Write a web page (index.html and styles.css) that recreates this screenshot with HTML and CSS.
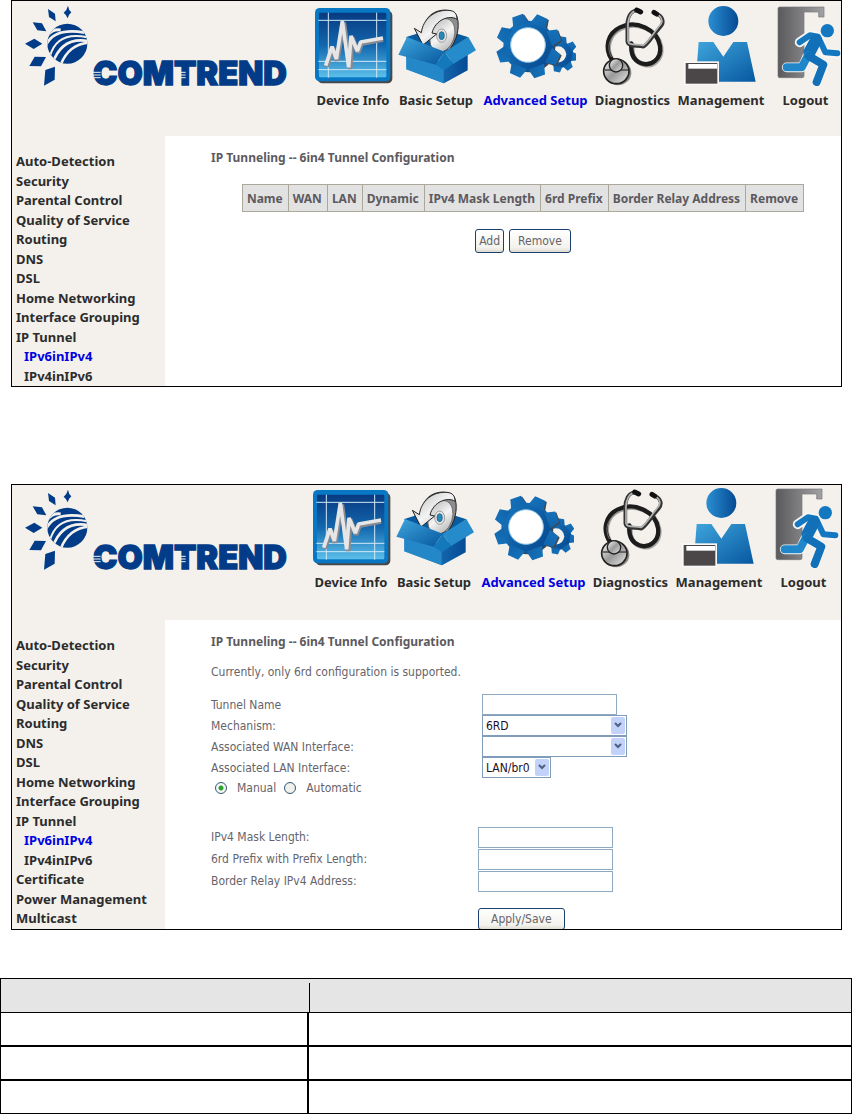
FILE: index.html
```
<!DOCTYPE html>
<html lang="en">
<head>
    <meta charset="UTF-8">
    <meta name="viewport" content="width=device-width, initial-scale=1.0">
    <title>IP Tunneling</title>
    <link rel="stylesheet" href="styles.css">
</head>
<body>

    <!-- Shared logo and menu icons -->
    <svg class="sprite" aria-hidden="true">
        <defs>
            <linearGradient id="blueDown" x1="0" y1="0" x2="0" y2="1">
                <stop offset="0" stop-color="#083a80"/>
                <stop offset="0.5" stop-color="#1266ad"/>
                <stop offset="1" stop-color="#5cc0ea"/>
            </linearGradient>
            <linearGradient id="blueLight" x1="0" y1="0" x2="1" y2="1">
                <stop offset="0" stop-color="#3fa5dc"/>
                <stop offset="1" stop-color="#0758a0"/>
            </linearGradient>
            <linearGradient id="blueSide" x1="0" y1="0" x2="1" y2="0">
                <stop offset="0" stop-color="#2b8fd2"/>
                <stop offset="1" stop-color="#054a94"/>
            </linearGradient>
            <linearGradient id="gearFill" gradientUnits="userSpaceOnUse" x1="-80" y1="-60" x2="80" y2="60">
                <stop offset="0" stop-color="#1878c0"/>
                <stop offset="1" stop-color="#06468c"/>
            </linearGradient>
            <linearGradient id="metal" x1="0" y1="0" x2="1" y2="1">
                <stop offset="0" stop-color="#ffffff"/>
                <stop offset="0.5" stop-color="#9a9a9a"/>
                <stop offset="1" stop-color="#e8e8e8"/>
            </linearGradient>
            <linearGradient id="disc" x1="0" y1="0" x2="1" y2="1">
                <stop offset="0" stop-color="#b4b4b4"/>
                <stop offset="0.5" stop-color="#f4f4f4"/>
                <stop offset="1" stop-color="#a8a8a8"/>
            </linearGradient>
            <linearGradient id="door" x1="0" y1="0" x2="1" y2="0">
                <stop offset="0" stop-color="#5a5a5c"/>
                <stop offset="1" stop-color="#a2a2a4"/>
            </linearGradient>
            <clipPath id="globe"><circle cx="202" cy="131" r="60"/></clipPath>
            <path id="tooth" d="M-25 -66 L-17 -97 H17 L25 -66 Z"/>
        </defs>

        <symbol id="logo" viewBox="72 12 798 252">
            <g fill="#023c88">
                <path d="M144 27 L165 41 167 64 147 51Z"/>
                <path d="M204 17 Q206 31 214 37 Q206 44 203 55 Q199 44 191 38 Q201 30 204 17Z"/>
                <path d="M98 67 L126 70 139 94 112 91Z"/>
                <path d="M75 131 L103 116 127 131 101 147Z"/>
                <path d="M104 170 L138 171 123 199 88 198Z"/>
                <path d="M136 210 L165 200 164 239 132 257Z"/>
                <circle cx="202" cy="131" r="60"/>
            </g>
            <g class="globe-lines" clip-path="url(#globe)">
                <path d="M142 107 Q158 86 182 90"/>
                <path d="M138 136 Q162 82 254 98" stroke-width="8"/>
                <path d="M150 168 Q172 92 262 112" stroke-width="6"/>
                <path d="M158 190 Q186 108 268 124" stroke-width="8"/>
                <path d="M180 200 Q204 132 268 128" stroke-width="8"/>
            </g>
            <text x="279" y="255" class="logo-text">COMTREND</text>
            <path class="logo-stripes" d="M276 217H302M276 225H302M276 233H302M529 217H557M529 225H557M529 233H557"/>
        </symbol>

        <symbol id="icon-device" viewBox="36 18 240 240">
            <rect x="50" y="32" width="224" height="218" rx="14" fill="#46484c"/>
            <rect x="42" y="24" width="226" height="220" rx="14" fill="#0878c4"/>
            <rect x="54" y="38" width="202" height="194" rx="4" fill="url(#blueDown)"/>
            <path d="M52 61H256M52 184H256M52 209H256M82 38V233M227 38V233" stroke="#cfe8f8" stroke-width="3"/>
            <path d="M77 200L95 145 108 182 128 68 147 207 153 113 171 158 181 131 246 118" fill="none" stroke="#888b92" stroke-width="15" stroke-linejoin="bevel"/>
            <path d="M74 197L93 140 106 177 124 63 143 202 150 108 169 153 179 126 246 114" fill="none" stroke="#e6e6e6" stroke-width="11" stroke-linejoin="bevel"/>
        </symbol>

        <symbol id="icon-basic" viewBox="285 18 240 240">
            <path d="M314 112L408 82 502 112 430 162Z" fill="#075b9e"/>
            <path d="M372 72C380 36 430 18 462 40C480 62 472 120 444 150L410 150Z" fill="#8c8e90" stroke="#222" stroke-width="3"/>
            <ellipse cx="424" cy="106" rx="36" ry="52" transform="rotate(18 424 106)" fill="url(#disc)" stroke="#555" stroke-width="2"/>
            <ellipse cx="422" cy="107" rx="15" ry="20" fill="#e4e4e4" stroke="#777" stroke-width="2"/>
            <ellipse cx="422" cy="107" rx="8" ry="12" fill="#2889b8" stroke="#155575" stroke-width="2"/>
            <path d="M361 98C366 58 399 28 444 31C462 33 468 42 468 58C445 43 402 60 393 99L407 102 366 135 340 85Z" fill="url(#disc)" stroke="#222" stroke-width="3"/>
            <path d="M316 160L428 190 500 158V211L429 250 316 208Z" fill="url(#blueSide)"/>
            <path d="M316 160L428 190V250L316 208Z" fill="#2488c8"/>
            <path d="M318 111L431 155 404 194 292 164Z" fill="url(#blueLight)"/>
            <path d="M431 155L502 111 525 151 456 192Z" fill="#268bca"/>
            <path d="M431 155L404 194 429 211 456 192Z" fill="#1479bb"/>
        </symbol>

        <symbol id="icon-advanced" viewBox="582 18 240 240">
            <g transform="translate(774 163) scale(0.55)" fill="url(#gearFill)">
                <circle r="72"/>
                <use href="#tooth" transform="rotate(10)"/>
                <use href="#tooth" transform="rotate(55)"/>
                <use href="#tooth" transform="rotate(100)"/>
                <use href="#tooth" transform="rotate(145)"/>
                <use href="#tooth" transform="rotate(190)"/>
                <use href="#tooth" transform="rotate(325)"/>
                <circle cx="-10" r="44" fill="#f4f1ec"/>
            </g>
            <g transform="translate(680 138)">
                <g fill="#3f4850" transform="translate(4 3)">
                    <circle r="76"/>
                    <use href="#tooth" transform="rotate(25)"/>
                    <use href="#tooth" transform="rotate(70)"/>
                    <use href="#tooth" transform="rotate(115)"/>
                    <use href="#tooth" transform="rotate(340)"/>
                </g>
                <g fill="url(#gearFill)">
                    <circle r="76"/>
                    <use href="#tooth" transform="rotate(25)"/>
                    <use href="#tooth" transform="rotate(70)"/>
                    <use href="#tooth" transform="rotate(115)"/>
                    <use href="#tooth" transform="rotate(160)"/>
                    <use href="#tooth" transform="rotate(205)"/>
                    <use href="#tooth" transform="rotate(250)"/>
                    <use href="#tooth" transform="rotate(295)"/>
                    <use href="#tooth" transform="rotate(340)"/>
                </g>
                <circle cx="-2" cy="-3" r="52" fill="#fff" stroke="#8fc3e6" stroke-width="3"/>
            </g>
        </symbol>

        <symbol id="icon-diagnostics" viewBox="65 18 240 240">
            <g fill="none" stroke-linecap="round">
                <path d="M126 184C102 148 112 104 150 86C198 62 262 92 270 140C276 182 242 204 214 194C186 184 182 158 184 134" stroke="#a5a3a0" stroke-width="12"/>
                <path d="M122 180C98 144 108 100 146 82C194 58 258 88 266 138C272 178 238 200 210 190C182 180 178 154 180 130" stroke="#1c1c1c" stroke-width="13"/>
                <path d="M120 170C104 142 114 108 148 88" stroke="#777" stroke-width="3"/>
                <path d="M202 32C176 28 166 56 168 84V124C170 140 190 136 216 140C230 134 240 112 266 82C282 66 274 46 250 40" stroke="#333" stroke-width="11"/>
                <path d="M202 32C178 30 168 56 170 84V124C172 136 190 132 216 136C228 130 240 108 264 78C278 64 272 48 250 40" stroke="#b4b4b4" stroke-width="5"/>
                <path d="M196 30L208 36M248 37L256 42" stroke="#111" stroke-width="15"/>
            </g>
            <ellipse cx="140" cy="218" rx="40" ry="38" fill="#8b8985"/>
            <ellipse cx="135" cy="214" rx="38" ry="37" fill="url(#metal)" stroke="#222" stroke-width="5"/>
            <path d="M100 210H170" stroke="#555" stroke-width="5"/>
            <circle cx="134" cy="196" r="20" fill="url(#metal)" stroke="#222" stroke-width="4"/>
        </symbol>

        <symbol id="icon-management" viewBox="330 18 240 240">
            <circle cx="457" cy="63" r="45" fill="url(#blueSide)"/>
            <path d="M383 126H427L457 170 487 126H528L554 245H374Z" fill="url(#blueLight)"/>
            <rect x="338" y="184" width="106" height="72" fill="#f8f8f8"/>
            <rect x="344" y="189" width="95" height="62" fill="#4b4748"/>
            <rect x="352" y="192" width="86" height="14" fill="#fff"/>
        </symbol>

        <symbol id="icon-logout" viewBox="600 18 216 240">
            <path d="M629 21H762V51H746V36H702V228Q702 233 696 233H629Q624 233 624 228V26Q624 21 629 21Z" fill="url(#door)" stroke="#77777a" stroke-width="2"/>
            <g fill="none" stroke-linecap="round" stroke-linejoin="round">
                <path d="M689 127L720 106 744 110 762 157 800 162M744 120L715 163 697 202H650M716 168L760 194 740 246" stroke="#f8f7f5" stroke-width="29"/>
                <path d="M689 127L720 106 744 110 766 157 802 160" stroke="#1478c0" stroke-width="18"/>
                <path d="M738 120L718 158" stroke="#1170b8" stroke-width="36"/>
                <path d="M714 166L695 202H650" stroke="#2088ca" stroke-width="24"/>
                <path d="M716 168L760 194 740 246" stroke="#1170b8" stroke-width="24"/>
            </g>
            <circle cx="772" cy="92" r="20" fill="#1478c0"/>
        </symbol>
    </svg>

    <section class="panel">
        <header class="top">
            <svg class="logo" role="img" aria-label="Comtrend"><use href="#logo"/></svg>
            <nav class="menu">
                <a href="#"><svg><use href="#icon-device"/></svg>Device Info</a>
                <a href="#"><svg><use href="#icon-basic"/></svg>Basic Setup</a>
                <a href="#" class="active"><svg><use href="#icon-advanced"/></svg>Advanced Setup</a>
                <a href="#"><svg><use href="#icon-diagnostics"/></svg>Diagnostics</a>
                <a href="#"><svg><use href="#icon-management"/></svg>Management</a>
                <a href="#"><svg class="narrow"><use href="#icon-logout"/></svg>Logout</a>
            </nav>
        </header>
        <div class="main">
            <ul class="sidebar">
                <li><a href="#">Auto-Detection</a></li>
                <li><a href="#">Security</a></li>
                <li><a href="#">Parental Control</a></li>
                <li><a href="#">Quality of Service</a></li>
                <li><a href="#">Routing</a></li>
                <li><a href="#">DNS</a></li>
                <li><a href="#">DSL</a></li>
                <li><a href="#">Home Networking</a></li>
                <li><a href="#">Interface Grouping</a></li>
                <li><a href="#">IP Tunnel</a></li>
                <li class="sub"><a href="#" class="active">IPv6inIPv4</a></li>
                <li class="sub"><a href="#">IPv4inIPv6</a></li>
            </ul>
            <div class="content">
                <h2>IP Tunneling -- 6in4 Tunnel Configuration</h2>
                <table class="tunnels">
                    <tr>
                        <th>Name</th>
                        <th>WAN</th>
                        <th>LAN</th>
                        <th>Dynamic</th>
                        <th>IPv4 Mask Length</th>
                        <th>6rd Prefix</th>
                        <th>Border Relay Address</th>
                        <th>Remove</th>
                    </tr>
                </table>
                <div class="buttons">
                    <button type="button" class="tight">Add</button>
                    <button type="button">Remove</button>
                </div>
            </div>
        </div>
    </section>

    <section class="panel panel-form">
        <header class="top">
            <svg class="logo" role="img" aria-label="Comtrend"><use href="#logo"/></svg>
            <nav class="menu">
                <a href="#"><svg><use href="#icon-device"/></svg>Device Info</a>
                <a href="#"><svg><use href="#icon-basic"/></svg>Basic Setup</a>
                <a href="#" class="active"><svg><use href="#icon-advanced"/></svg>Advanced Setup</a>
                <a href="#"><svg><use href="#icon-diagnostics"/></svg>Diagnostics</a>
                <a href="#"><svg><use href="#icon-management"/></svg>Management</a>
                <a href="#"><svg class="narrow"><use href="#icon-logout"/></svg>Logout</a>
            </nav>
        </header>
        <div class="main">
            <ul class="sidebar">
                <li><a href="#">Auto-Detection</a></li>
                <li><a href="#">Security</a></li>
                <li><a href="#">Parental Control</a></li>
                <li><a href="#">Quality of Service</a></li>
                <li><a href="#">Routing</a></li>
                <li><a href="#">DNS</a></li>
                <li><a href="#">DSL</a></li>
                <li><a href="#">Home Networking</a></li>
                <li><a href="#">Interface Grouping</a></li>
                <li><a href="#">IP Tunnel</a></li>
                <li class="sub"><a href="#" class="active">IPv6inIPv4</a></li>
                <li class="sub"><a href="#">IPv4inIPv6</a></li>
                <li><a href="#">Certificate</a></li>
                <li><a href="#">Power Management</a></li>
                <li><a href="#">Multicast</a></li>
            </ul>
            <form class="content">
                <h2>IP Tunneling -- 6in4 Tunnel Configuration</h2>
                <p>Currently, only 6rd configuration is supported.</p>

                <div class="fields">
                    <label for="tunnelName">Tunnel Name</label>
                    <input type="text" id="tunnelName">

                    <label for="mechanism">Mechanism:</label>
                    <div class="select wide">
                        <select id="mechanism"><option>6RD</option></select>
                        <svg viewBox="0 0 14 17"><path d="M4 6l3 3 3-3"/></svg>
                    </div>

                    <label for="wanIf">Associated WAN Interface:</label>
                    <div class="select wide">
                        <select id="wanIf"><option></option></select>
                        <svg viewBox="0 0 14 17"><path d="M4 6l3 3 3-3"/></svg>
                    </div>

                    <label for="lanIf">Associated LAN Interface:</label>
                    <div class="select">
                        <select id="lanIf"><option>LAN/br0</option></select>
                        <svg viewBox="0 0 14 17"><path d="M4 6l3 3 3-3"/></svg>
                    </div>
                </div>

                <div class="radios">
                    <input type="radio" name="mode" id="manual" checked>
                    <label for="manual">Manual</label>
                    <input type="radio" name="mode" id="automatic">
                    <label for="automatic">Automatic</label>
                </div>

                <div class="fields manual">
                    <label for="maskLen">IPv4 Mask Length:</label>
                    <input type="text" id="maskLen">

                    <label for="prefix">6rd Prefix with Prefix Length:</label>
                    <input type="text" id="prefix">

                    <label for="relay">Border Relay IPv4 Address:</label>
                    <input type="text" id="relay">

                    <button type="button">Apply/Save</button>
                </div>
            </form>
        </div>
    </section>

    <table class="options">
        <tr><th></th><th></th></tr>
        <tr><td></td><td></td></tr>
        <tr><td></td><td></td></tr>
        <tr><td></td><td></td></tr>
    </table>

</body>
</html>
```
FILE: styles.css
```
* {
    box-sizing: border-box;
}
body {
    margin: 0;
    background-color: #fff;
    font-family: "DejaVu Sans Condensed", "DejaVu Sans", sans-serif;
    font-size: 12px;
    color: #66646a;
}
a {
    color: #2c2c2c;
    text-decoration: none;
}
a.active {
    color: #0000e0;
}
.sprite {
    position: absolute;
    width: 0;
    height: 0;
}

/* Panels */
.panel {
    margin: 0 10px 97px 11px;
    border: 1px solid #000;
    overflow: hidden;
}
.panel-form {
    margin-bottom: 48px;
}
.top {
    display: flex;
    justify-content: space-between;
    height: 135px;
    background-color: #f4f1ec;
}
.logo {
    flex: none;
    width: 266px;
    height: 84px;
    margin: 3px 0 0 12px;
}
.logo-text {
    font-family: Inter, sans-serif;
    font-weight: 900;
    font-size: 98px;
    fill: #023c88;
    stroke: #023c88;
    stroke-width: 4;
}
.logo-stripes {
    stroke: #f4f1ec;
    stroke-width: 3;
}
.globe-lines {
    fill: none;
    stroke: #f4f1ec;
    stroke-width: 9;
}
.menu {
    display: grid;
    grid-template-columns: 82px 84px 115px 79px 98px 71px;
    margin-top: 5px;
}
.panel-form .menu {
    margin: 3px 2px 0 0;
}
.menu a {
    display: flex;
    flex-direction: column;
    align-items: center;
    font-family: "Noto Sans", sans-serif;
    font-size: 13px;
    font-weight: 700;
    line-height: 28px;
    white-space: nowrap;
}
.menu svg {
    flex: none;
    width: 80px;
    height: 80px;
}
.menu svg.narrow {
    width: 72px;
}

.main {
    display: flex;
    min-height: 250px;
}
.panel-form .main {
    min-height: 309px;
}
.sidebar {
    display: grid;
    grid-auto-rows: 1fr;
    flex: none;
    width: 153px;
    margin: 0;
    padding: 16px 0 0 4px;
    list-style: none;
    background-color: #f4f1ec;
    font-family: "Noto Sans", sans-serif;
    font-size: 13px;
    font-weight: 700;
    line-height: 19px;
}
.sidebar .sub {
    padding-left: 8px;
}
.content {
    flex: 1;
    padding: 12px 6px 0 46px;
}
h2 {
    margin: 0;
    font-family: "Noto Sans", sans-serif;
    font-size: 12px;
    font-weight: 700;
    line-height: 20px;
    color: #5c5a60;
}
p {
    margin: 10px 0;
    line-height: 20px;
}

/* Tunnel list */
.tunnels {
    margin: 16px auto 17px;
    border-collapse: collapse;
}
.tunnels th {
    height: 27px;
    padding: 0 5px 0 4px;
    border: 1px solid #aca899;
    background-color: #e2e2e2;
    font-family: "Noto Sans", sans-serif;
    font-size: 12px;
    font-weight: 700;
    color: #5c5a60;
    white-space: nowrap;
}
.buttons {
    display: flex;
    justify-content: center;
    gap: 5px;
}
button {
    height: 24px;
    padding: 0 8px;
    border: 1px solid #1c3f70;
    border-radius: 3px;
    background: linear-gradient(#fff, #f3f2ec 80%, #dedbd0);
    font: inherit;
    color: inherit;
}
button.tight {
    padding: 0 3px;
}

/* Tunnel form */
.fields {
    display: grid;
    grid-template-columns: 271px auto;
    grid-auto-rows: 21px;
    align-items: center;
    justify-items: start;
    margin-top: 12px;
}
.fields.manual {
    grid-template-columns: 267px auto;
    grid-auto-rows: 22px;
    margin-top: 28px;
}
.fields button {
    grid-column: 2;
    height: 22px;
    margin-top: 32px;
    padding: 0 12px;
}
input[type="text"] {
    width: 135px;
    height: 21px;
    border: 1px solid #8fa9c0;
    background-color: #fff;
}
.select {
    position: relative;
    width: 69px;
}
.select.wide {
    width: 145px;
}
select {
    display: block;
    appearance: none;
    width: 100%;
    height: 21px;
    padding: 0 3px;
    border: 1px solid #7f9db9;
    border-radius: 0;
    background-color: #fff;
    font: inherit;
    color: #1c1028;
}
.select svg {
    position: absolute;
    top: 2px;
    right: 2px;
    width: 14px;
    height: 17px;
    border-radius: 2px;
    background-color: #c3d2f8;
    fill: none;
    stroke: #4d6185;
    stroke-width: 2;
    pointer-events: none;
}
.radios {
    display: flex;
    align-items: center;
    height: 20px;
    padding-left: 4px;
}
.radios label {
    margin: 0 8px 0 10px;
}
input[type="radio"] {
    appearance: none;
    width: 12px;
    height: 12px;
    margin: 0;
    border: 1px solid #2f5878;
    border-radius: 50%;
    background-color: #f0f0ec;
}
input[type="radio"]:checked {
    background: radial-gradient(#2ca32c 2px, #f6f8f6 3px);
}

/* Options table */
.options {
    width: 100%;
    table-layout: fixed;
    border-collapse: separate;
    border-spacing: 0;
    border: 1px solid #000;
}
.options th {
    height: 34px;
    padding: 0;
    background-color: #e5e5e5;
    border-bottom: 1px solid #000;
}
.options th:first-child {
    width: 308px;
}
.options th:last-child {
    background-image: linear-gradient(#000, #000);
    background-position: 0 4px;
    background-size: 1px 100%;
    background-repeat: no-repeat;
}
.options td {
    height: 34px;
    padding: 0;
    border-bottom: 2px solid #000;
}
.options td:first-child {
    border-right: 2px solid #000;
}
.options tr:last-child td {
    height: 32px;
    border-bottom: 0;
}
```
